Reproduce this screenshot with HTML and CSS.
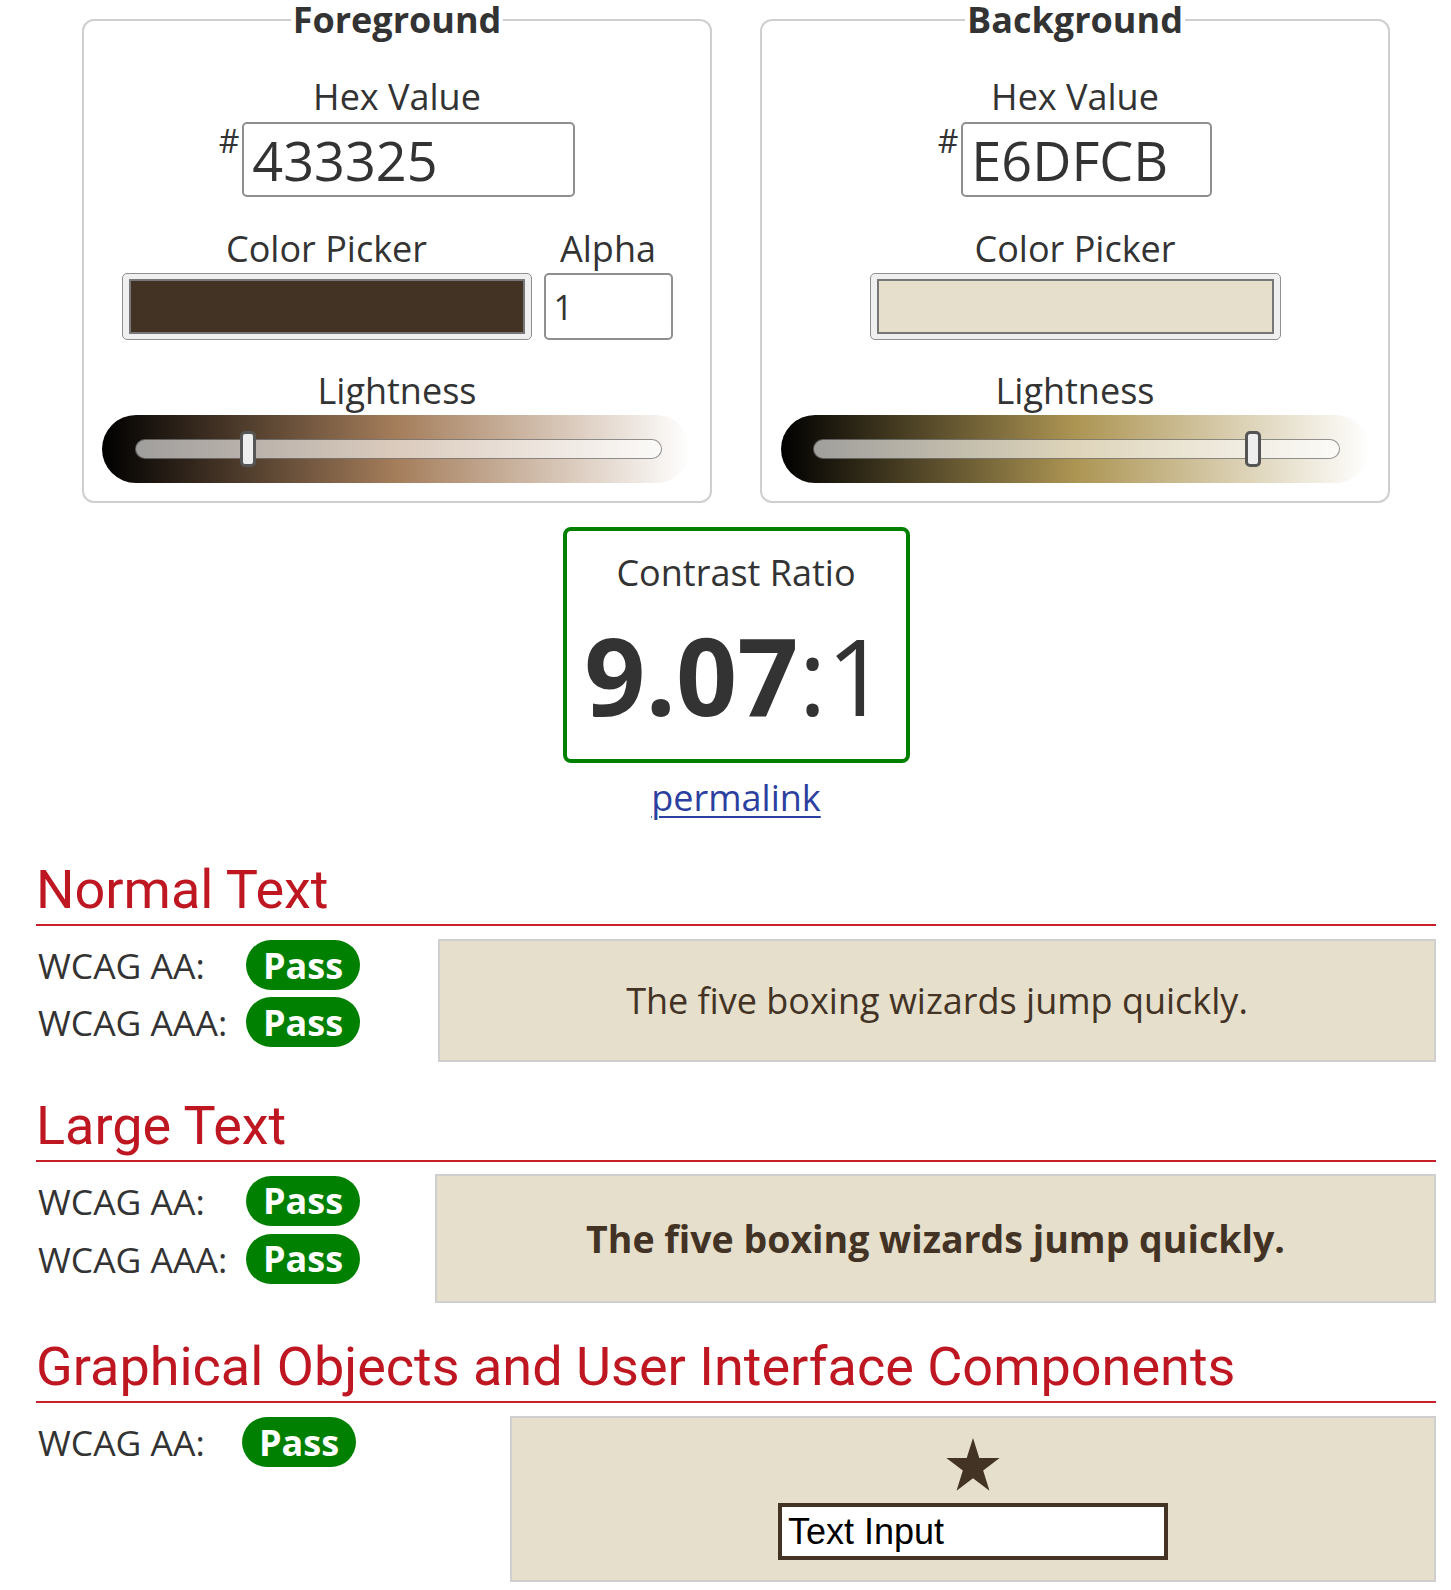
FILE: index.html
```html
<!DOCTYPE html>
<html lang="en">
<head>
<meta charset="utf-8">
<title>Contrast Checker</title>
<link rel="stylesheet" href="styles.css">
</head>
<body>
<div class="page">
  <div class="pickers">
    <fieldset class="panel">
      <legend class="panel-title">Foreground</legend>
      <div class="field-label field-label--hex">Hex Value</div>
      <div class="hex-row">
        <span class="hash">#</span>
        <input class="hex-input hex-input--fg" type="text" value="433325">
      </div>
      <div class="picker-row">
        <div class="picker-col">
          <div class="field-label">Color Picker</div>
          <div class="swatch-box swatch-box--fg"><div class="swatch swatch--fg"></div></div>
        </div>
        <div class="picker-col">
          <div class="field-label">Alpha</div>
          <input class="alpha-input" type="text" value="1">
        </div>
      </div>
      <div class="field-label field-label--light">Lightness</div>
      <div class="slider slider--fg">
        <div class="track"><div class="thumb" style="left: 104px"></div></div>
      </div>
    </fieldset>

    <fieldset class="panel">
      <legend class="panel-title">Background</legend>
      <div class="field-label field-label--hex">Hex Value</div>
      <div class="hex-row">
        <span class="hash">#</span>
        <input class="hex-input hex-input--bg" type="text" value="E6DFCB">
      </div>
      <div class="picker-row">
        <div class="picker-col">
          <div class="field-label">Color Picker</div>
          <div class="swatch-box swatch-box--bg"><div class="swatch swatch--bg"></div></div>
        </div>
      </div>
      <div class="field-label field-label--light">Lightness</div>
      <div class="slider slider--bg">
        <div class="track"><div class="thumb" style="left: 431px"></div></div>
      </div>
    </fieldset>
  </div>

  <div class="ratio-box">
    <div class="ratio-label">Contrast Ratio</div>
    <div class="ratio-value"><b>9.07</b>:1</div>
  </div>
  <div class="permalink-row"><a class="permalink" href="#">permalink</a></div>

  <section class="result result--normal">
    <h2 class="result-title">Normal Text</h2>
    <div class="result-body">
      <div class="levels">
        <div class="level-row"><span class="level-name">WCAG AA:</span><span class="pill">Pass</span></div>
        <div class="level-row"><span class="level-name">WCAG AAA:</span><span class="pill">Pass</span></div>
      </div>
      <div class="sample sample--normal">The five boxing wizards jump quickly.</div>
    </div>
  </section>

  <section class="result result--large">
    <h2 class="result-title">Large Text</h2>
    <div class="result-body">
      <div class="levels">
        <div class="level-row"><span class="level-name">WCAG AA:</span><span class="pill">Pass</span></div>
        <div class="level-row"><span class="level-name">WCAG AAA:</span><span class="pill">Pass</span></div>
      </div>
      <div class="sample sample--large">The five boxing wizards jump quickly.</div>
    </div>
  </section>

  <section class="result result--graphic">
    <h2 class="result-title">Graphical Objects and User Interface Components</h2>
    <div class="result-body">
      <div class="levels">
        <div class="level-row"><span class="level-name">WCAG AA:</span><span class="pill">Pass</span></div>
      </div>
      <div class="sample sample--graphic">
        <svg class="star" width="54" height="53" viewBox="0 0 54 51" preserveAspectRatio="none" aria-hidden="true">
          <polygon points="27,0 33.29,19.34 53.63,19.35 37.18,31.31 43.46,50.65 27,38.7 10.54,50.65 16.82,31.31 0.37,19.35 20.71,19.34" fill="#433325"/>
        </svg>
        <input class="demo-input" type="text" value="Text Input">
      </div>
    </div>
  </section>
</div>
</body>
</html>
```

FILE: styles.css
```css
* { box-sizing: border-box; }

html, body {
  margin: 0;
  padding: 0;
  background: #fff;
}

body {
  font-family: "Open Sans", "Noto Sans", sans-serif;
  color: #333;
}

.page {
  width: 1451px;
  padding: 0 15px 0 36px;
}

/* ---------- colour pickers ---------- */
.pickers {
  display: flex;
  justify-content: center;
  gap: 48px;
}

.panel {
  width: 630px;
  min-width: 0;
  margin: 0;
  padding: 0 0 18px;
  border: 2px solid #cfcfcf;
  border-radius: 12px;
}

.panel-title {
  margin: 0 auto;
  padding: 0 2px;
  font-size: 36px;
  line-height: 40px;
  font-weight: 700;
  color: #333;
}

.field-label {
  font-size: 36px;
  line-height: 48px;
  text-align: center;
  color: #333;
  white-space: nowrap;
}

.field-label--hex { margin-top: 33px; }
.field-label--light { margin-top: 27px; }

.hex-row {
  display: flex;
  justify-content: center;
  align-items: flex-start;
  margin-top: 1px;
}

.hash {
  font-size: 32px;
  line-height: 34px;
  margin-top: 2px;
  margin-right: 3px;
}

.hex-input {
  height: 75px;
  padding: 0 8px;
  border: 2px solid #8f8f8f;
  border-radius: 5px;
  background: #fff;
  font-family: "Open Sans", "Noto Sans", sans-serif;
  font-size: 54px;
  color: #333;
}
.hex-input--fg { width: 333px; }
.hex-input--bg { width: 251px; }

.picker-row {
  display: flex;
  justify-content: center;
  gap: 12px;
  margin-top: 28px;
}

.picker-col {
  display: flex;
  flex-direction: column;
  align-items: center;
}

.swatch-box {
  display: flex;
  height: 67px;
  padding: 5px 6px;
  border: 1.5px solid #8f8f8f;
  border-radius: 5px;
  background: #efefef;
}
.swatch-box--fg { width: 410px; }
.swatch-box--bg { width: 411px; }

.swatch {
  flex: 1;
  border: 2px solid #777;
}
.swatch--fg { background: #433325; }
.swatch--bg { background: #e6dfcb; }

.alpha-input {
  width: 129px;
  height: 67px;
  padding: 0 8px;
  border: 2px solid #8f8f8f;
  border-radius: 5px;
  background: #fff;
  font-family: "Open Sans", "Noto Sans", sans-serif;
  font-size: 34px;
  color: #333;
}

.slider {
  display: flex;
  align-items: center;
  width: 588px;
  height: 68px;
  margin-left: 18px;
  padding-left: 33px;
  border-radius: 34px;
}
.slider--fg { background: linear-gradient(to right, #000 0%, hsl(28, 29%, 50%) 50%, #fff 100%); }
.slider--bg { background: linear-gradient(to right, #000 0%, hsl(44, 35%, 50%) 50%, #fff 100%); margin-left: 19px; padding-left: 32px; }

.track {
  position: relative;
  width: 527px;
  height: 20px;
  border: 1.5px solid rgba(0, 0, 0, 0.42);
  border-radius: 10px;
  background: rgba(255, 255, 255, 0.6);
}

.thumb {
  position: absolute;
  top: 50%;
  width: 16px;
  height: 36px;
  transform: translateY(-50%);
  background: #eee;
  border: 3px solid #555;
  border-radius: 5px;
}

/* ---------- contrast ratio ---------- */
.ratio-box {
  width: 347px;
  margin: 24px auto 0;
  padding: 18px 0 19px;
  border: 4px solid #008000;
  border-radius: 8px;
  text-align: center;
}

.ratio-label {
  font-size: 36px;
  line-height: 48px;
}

.ratio-value {
  margin-top: 13px;
  font-size: 107px;
  line-height: 130px;
  font-weight: 400;
}
.ratio-value b { font-weight: 700; }

.permalink-row {
  margin-top: 11px;
  text-align: center;
  font-size: 36px;
  line-height: 48px;
}

.permalink {
  color: #2b3fa0;
  text-decoration: underline;
  text-decoration-thickness: 2px;
  text-underline-offset: 5px;
}

/* ---------- results ---------- */
.result-title {
  margin: 30px 0 0;
  font-family: Roboto, "Liberation Sans", sans-serif;
  font-size: 54px;
  line-height: 68px;
  font-weight: 400;
  color: #bf1722;
  border-bottom: 2px solid #c8202b;
  white-space: nowrap;
}
.result--normal .result-title { margin-top: 34px; }

.result-body {
  display: flex;
  margin-top: 13px;
}
.result--large .result-body { margin-top: 12px; }

.levels {
  flex: none;
  display: flex;
  flex-direction: column;
  gap: 7px;
  padding-top: 1px;
}
.result--normal .levels { width: 402px; }
.result--large .levels { width: 399px; }
.result--graphic .levels { width: 474px; }

.level-row {
  display: flex;
  align-items: center;
  height: 50px;
}
.result--large .level-row { height: 51px; }

.level-name {
  width: 210px;
  padding-left: 2px;
  font-size: 35.5px;
  line-height: 50px;
  color: #333;
  white-space: nowrap;
}
.result--graphic .level-name { width: 206px; }

.pill {
  display: flex;
  align-items: center;
  justify-content: center;
  width: 114px;
  height: 50px;
  border-radius: 25px;
  background: #008000;
  color: #fff;
  font-size: 36px;
  font-weight: 700;
}

.sample {
  flex: 1;
  display: flex;
  align-items: center;
  justify-content: center;
  border: 2px solid #cfcfcf;
  background: #e6dfcb;
  color: #433325;
  white-space: nowrap;
}

.sample--normal {
  height: 123px;
  font-size: 36px;
}

.sample--large {
  height: 129px;
  font-size: 37.5px;
  font-weight: 700;
}

.sample--graphic {
  height: 166px;
  flex-direction: column;
  justify-content: flex-start;
  padding-top: 20px;
}

.star {
  display: block;
  flex: none;
}

.demo-input {
  width: 390px;
  height: 57px;
  margin-top: 12px;
  padding: 0 6px;
  border: 4px solid #433325;
  border-radius: 0;
  background: #fff;
  font-family: "Liberation Sans", Arial, sans-serif;
  font-size: 36px;
  color: #000;
}
```
